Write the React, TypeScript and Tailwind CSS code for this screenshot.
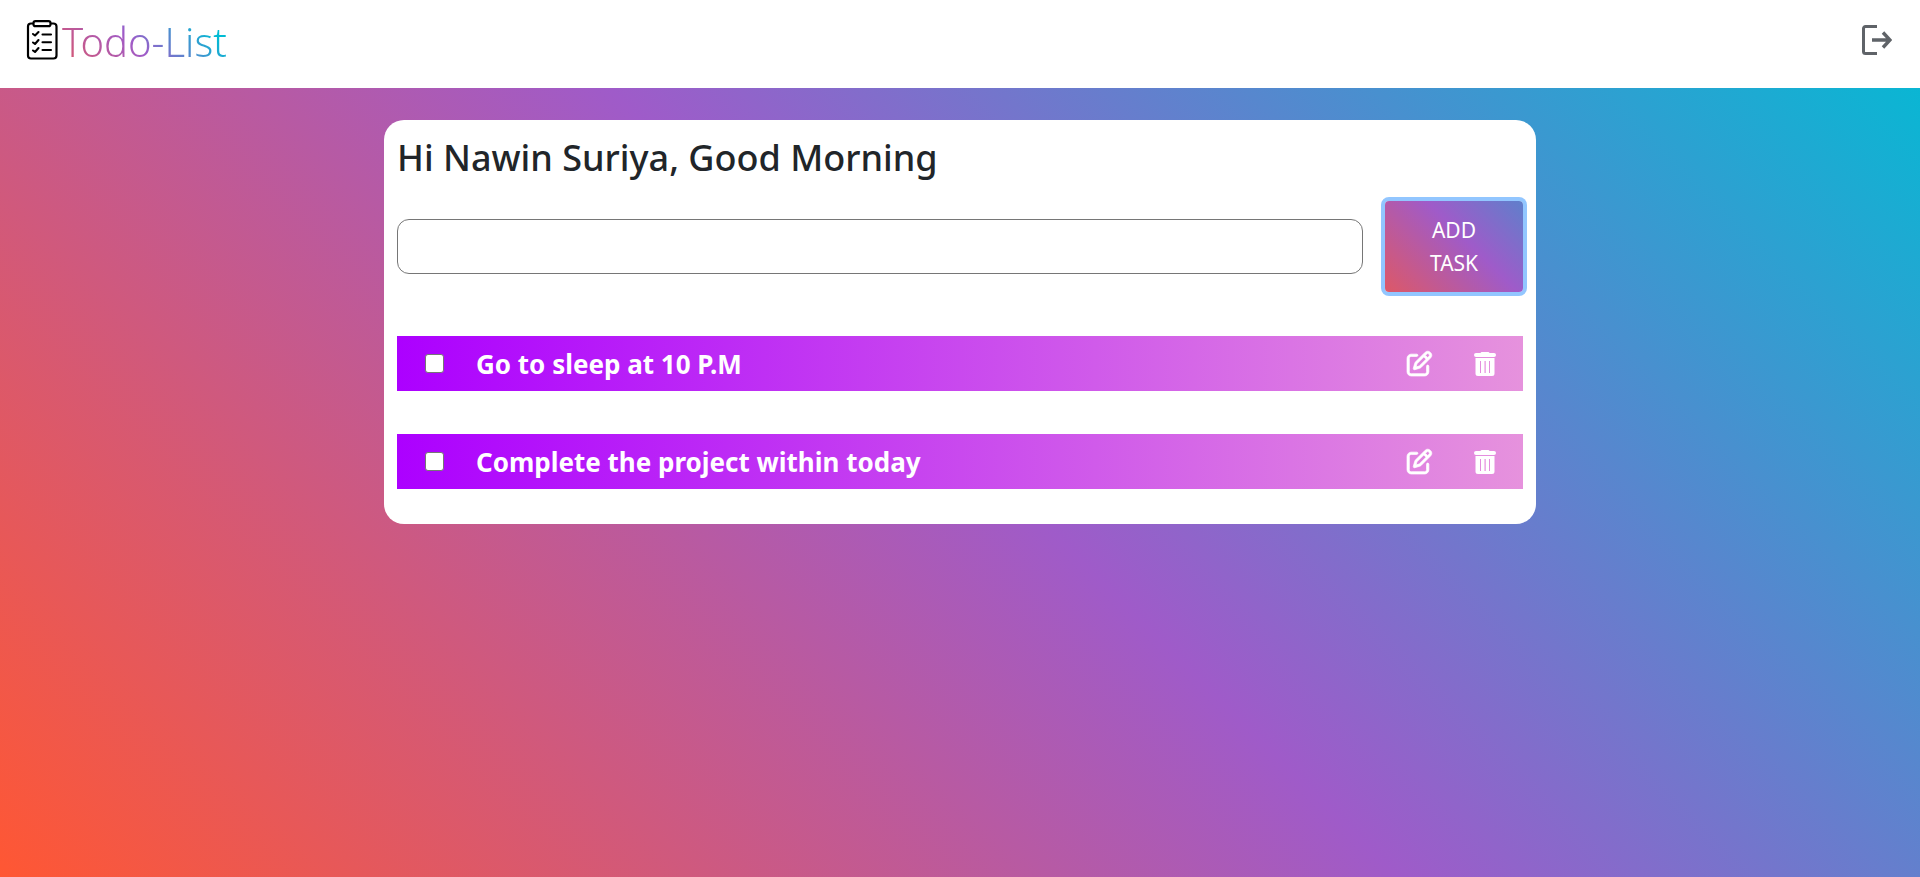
import { useState } from "react";
import { FaRegPenToSquare } from "react-icons/fa6";

function ClipboardLogo() {
  return (
    <svg viewBox="0 0 32 40" className="h-10 w-8" fill="none" stroke="#000" aria-hidden="true">
      <path d="M7 3.500H5A3 3 0 0 0 2 6.500v29a3 3 0 0 0 3 3h22.500a3 3 0 0 0 3-3v-29a3 3 0 0 0-3-3H25" strokeWidth="2.200" />
      <rect x="7.500" y="1.200" width="17" height="5" rx="2" strokeWidth="2.200" />
      <g strokeWidth="2.100" strokeLinecap="round" strokeLinejoin="round">
        <path d="M7 14l2 1.500 3.500-3.500M7 22.500l2 1.500 3.500-4M7 30.500l2 1.500 3.500-4" />
        <path d="M16.500 14.500h8.500M16.500 22.300h8.500M16.500 30h8.500" />
      </g>
    </svg>
  );
}

function SignOutIcon() {
  return (
    <svg viewBox="0 0 30 30" className="size-[30px]" fill="none" stroke="#5f6368" strokeWidth="3" aria-hidden="true">
      <path d="M15 1.500H3.500a2 2 0 0 0-2 2v23a2 2 0 0 0 2 2H15" />
      <path d="M10 15h17M21 7.500l7 7.500-7 7.500" strokeWidth="3.400" />
    </svg>
  );
}

function TrashIcon() {
  return (
    <svg viewBox="0 0 22 24" className="h-6 w-[22px]" fill="currentColor" fillRule="evenodd" aria-hidden="true">
      <path d="M7.500 0h7l1.200 1H20a2 2 0 0 1 0 4H2a2 2 0 0 1 0-4h4.300z" />
      <path d="M1.500 6h19v15.500A2.500 2.500 0 0 1 18 24H4a2.500 2.500 0 0 1-2.500-2.500zM6 9v12h1V9zm4.500 0v12h1.200V9zM15 9v12h1V9z" />
    </svg>
  );
}

function TaskRow({ id, title }: { id: string; title: string }) {
  return (
    <li className="flex h-[55px] items-center bg-[linear-gradient(90deg,#ac00ff,#e692dd)] pr-[27px] pl-7 text-white">
      <input
        id={id}
        type="checkbox"
        className="size-[19px] shrink-0 appearance-none rounded-[3px] border border-[#767676] bg-white checked:bg-[#0075ff]"
      />
      <label htmlFor={id} className="ml-8 grow text-[26px] leading-9 font-bold">
        {title}
      </label>
      <button type="button" aria-label={`Edit ${title}`} className="mr-[42px]">
        <FaRegPenToSquare className="size-[25px] overflow-visible" stroke="currentColor" strokeWidth="14" />
      </button>
      <button type="button" aria-label={`Delete ${title}`}>
        <TrashIcon />
      </button>
    </li>
  );
}

const initialTasks = ["Go to sleep at 10 P.M", "Complete the project within today"];

export default function App() {
  const [tasks, setTasks] = useState(initialTasks);
  const [draft, setDraft] = useState("");

  return (
    <div className="flex min-h-screen flex-col bg-[linear-gradient(45deg,#ff5733,#9f5bc9,#00bcd4)] font-['Noto_Sans',sans-serif] text-[#212529]">
      <header className="flex h-[88px] shrink-0 items-start justify-between bg-white pr-7 pl-[26px]">
        <a href="#" className="flex items-start pt-5">
          <ClipboardLogo />
          <span className="-mt-2 ml-1 bg-[linear-gradient(45deg,#e05761,#9f5bc9_45%,#00bcd4_85%)] bg-clip-text text-[40px] leading-[60px] font-light text-transparent">
            Todo-List
          </span>
        </a>
        <button type="button" aria-label="Sign out" className="mt-[25px]">
          <SignOutIcon />
        </button>
      </header>

      <main className="grow pt-8 pb-8">
        <section className="mx-auto w-3/5 rounded-[20px] bg-white px-[13px] pt-[14px] pb-[35px]">
          <h1 className="text-[36px] leading-12 font-medium">Hi Nawin Suriya, Good Morning</h1>
          <form
            className="mt-[19px] flex items-center gap-[22px]"
            onSubmit={(event) => {
              event.preventDefault();
              if (draft.trim()) setTasks([...tasks, draft.trim()]);
              setDraft("");
            }}
          >
            <input
              type="text"
              aria-label="New task"
              value={draft}
              onChange={(event) => setDraft(event.target.value)}
              className="h-[55px] min-w-0 grow rounded-xl border border-[#767676] bg-white px-4 text-xl"
            />
            <button
              type="submit"
              className="h-[91px] w-[138px] shrink-0 rounded-[4px] bg-[linear-gradient(45deg,#dd5867,#9f5bc9_58%,#5f7fcb)] px-8 text-[21px] leading-[33px] text-white ring-4 ring-[#92c6ff]"
            >
              ADD TASK
            </button>
          </form>
          <ul className="mt-11 flex flex-col gap-[43px]">
            {tasks.map((title, index) => (
              <TaskRow key={index} id={`task-${index}`} title={title} />
            ))}
          </ul>
        </section>
      </main>
    </div>
  );
}
